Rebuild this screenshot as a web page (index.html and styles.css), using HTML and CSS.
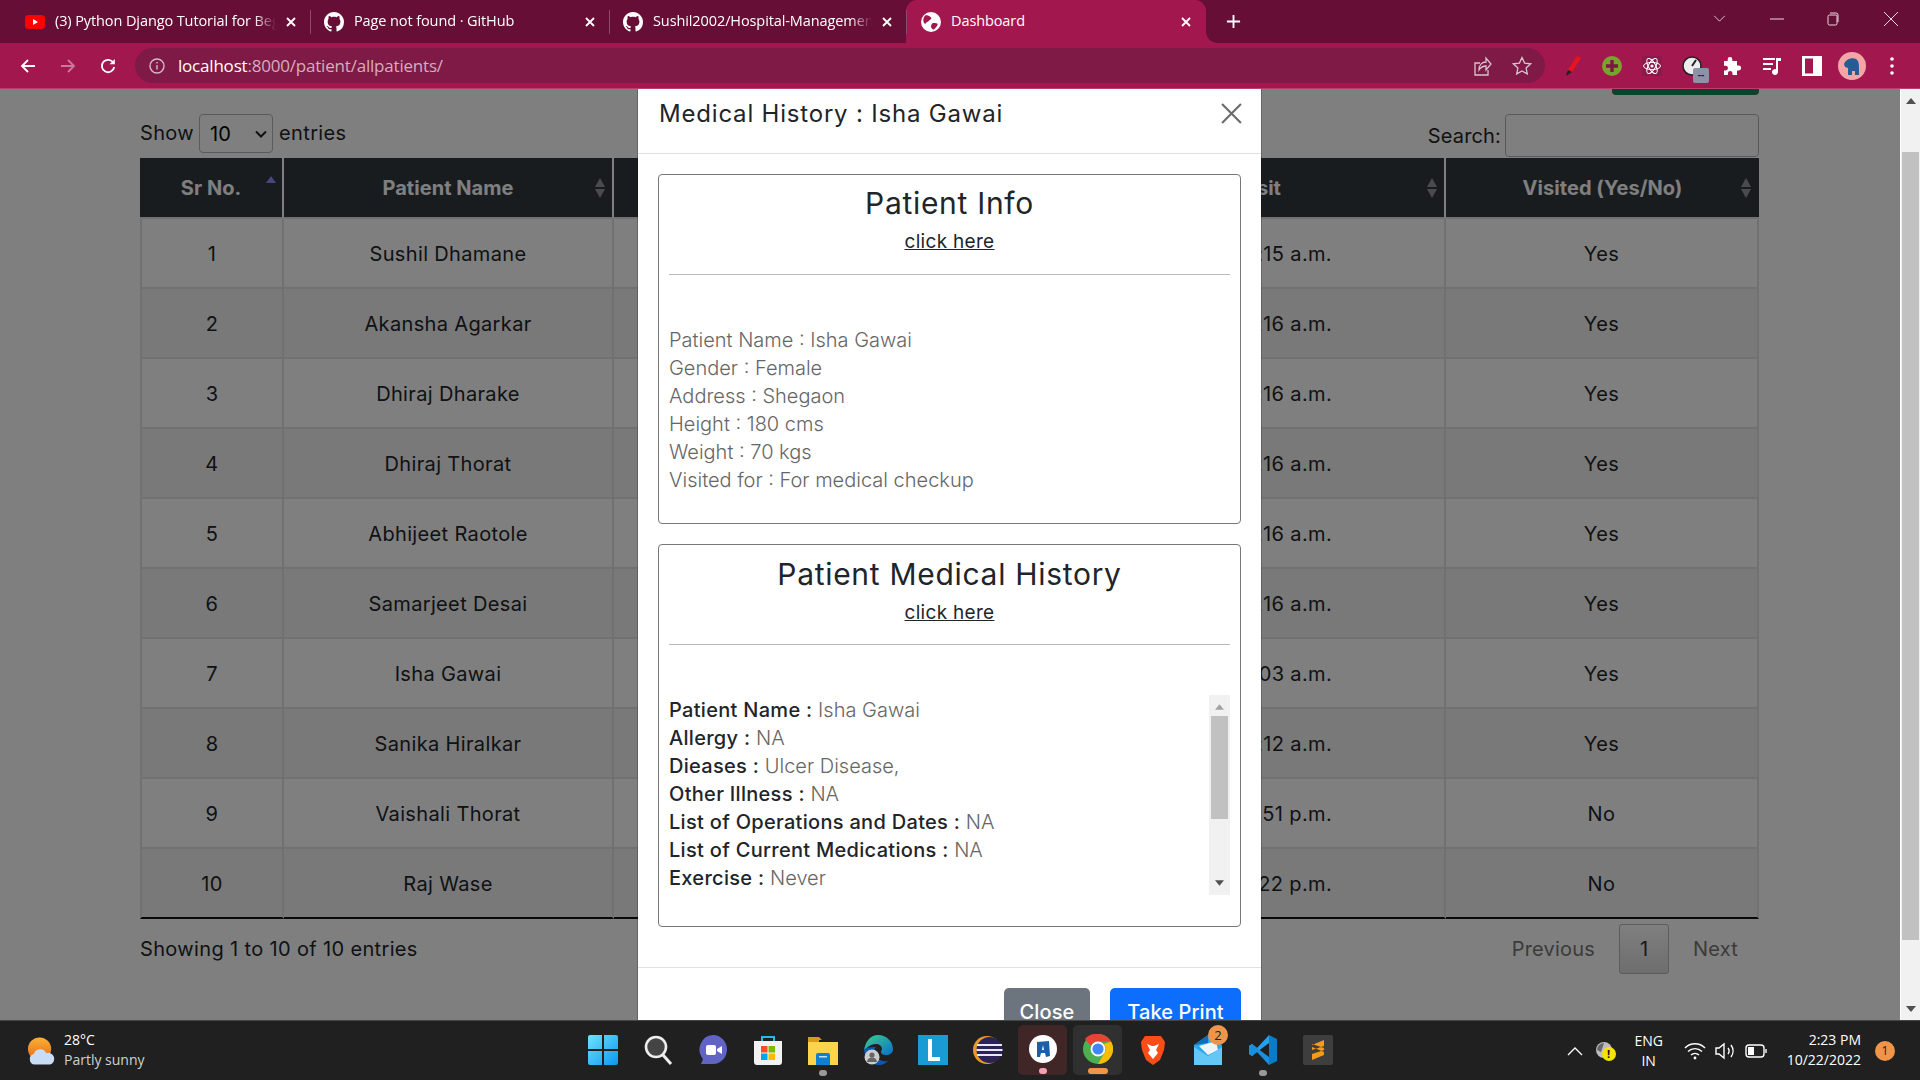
FILE: index.html
```html
<!DOCTYPE html>
<html lang="en">
<head>
<meta charset="utf-8">
<title>Dashboard</title>
<link rel="stylesheet" href="styles.css">
</head>
<body>
<div class="browser">
  <header class="tabstrip">
    <div class="tab">
      <svg class="fav" viewBox="0 0 20 14"><rect width="20" height="14" rx="3.5" fill="#f00"/><path d="M8 4l5 3-5 3z" fill="#fff"/></svg>
      <span class="tab-title">(3) Python Django Tutorial for Beginners</span>
      <svg class="tab-x" viewBox="0 0 10 10"><path d="M1 1l8 8M9 1l-8 8"/></svg>
    </div>
    <div class="tab">
      <svg class="fav" viewBox="0 0 16 16"><path fill="#fff" d="M8 0C3.58 0 0 3.58 0 8c0 3.54 2.29 6.53 5.47 7.59.4.07.55-.17.55-.38 0-.19-.01-.82-.01-1.49-2.01.37-2.53-.49-2.69-.94-.09-.23-.48-.94-.82-1.13-.28-.15-.68-.52-.01-.53.63-.01 1.08.58 1.23.82.72 1.21 1.87.87 2.33.66.07-.52.28-.87.51-1.07-1.78-.2-3.64-.89-3.64-3.95 0-.87.31-1.59.82-2.15-.08-.2-.36-1.02.08-2.12 0 0 .67-.21 2.2.82.64-.18 1.32-.27 2-.27.68 0 1.36.09 2 .27 1.53-1.04 2.2-.82 2.2-.82.44 1.1.16 1.92.08 2.12.51.56.82 1.27.82 2.15 0 3.07-1.87 3.75-3.65 3.95.29.25.54.73.54 1.48 0 1.07-.01 1.93-.01 2.2 0 .21.15.46.55.38A8.013 8.013 0 0016 8c0-4.42-3.58-8-8-8z"/></svg>
      <span class="tab-title">Page not found · GitHub</span>
      <svg class="tab-x" viewBox="0 0 10 10"><path d="M1 1l8 8M9 1l-8 8"/></svg>
    </div>
    <div class="tab tab-last">
      <svg class="fav" viewBox="0 0 16 16"><path fill="#fff" d="M8 0C3.58 0 0 3.58 0 8c0 3.54 2.29 6.53 5.47 7.59.4.07.55-.17.55-.38 0-.19-.01-.82-.01-1.49-2.01.37-2.53-.49-2.69-.94-.09-.23-.48-.94-.82-1.13-.28-.15-.68-.52-.01-.53.63-.01 1.08.58 1.23.82.72 1.21 1.87.87 2.33.66.07-.52.28-.87.51-1.07-1.78-.2-3.64-.89-3.64-3.95 0-.87.31-1.59.82-2.15-.08-.2-.36-1.02.08-2.12 0 0 .67-.21 2.2.82.64-.18 1.32-.27 2-.27.68 0 1.36.09 2 .27 1.53-1.04 2.2-.82 2.2-.82.44 1.1.16 1.92.08 2.12.51.56.82 1.27.82 2.15 0 3.07-1.87 3.75-3.65 3.95.29.25.54.73.54 1.48 0 1.07-.01 1.93-.01 2.2 0 .21.15.46.55.38A8.013 8.013 0 0016 8c0-4.42-3.58-8-8-8z"/></svg>
      <span class="tab-title">Sushil2002/Hospital-Management-System</span>
      <svg class="tab-x" viewBox="0 0 10 10"><path d="M1 1l8 8M9 1l-8 8"/></svg>
    </div>
    <div class="tab tab-active">
      <svg class="fav" viewBox="0 0 18 18"><circle cx="9" cy="9" r="9" fill="#fff"/><path fill="#a3174f" d="M4 3c2 0 4 .5 5 2s-1 2-2 3-3 1-3 3c-2-1-3-5 0-8zm7 7c2 0 4 0 4 1s-2 4-4 5c-1-1-2-2-2-3s1-3 2-3z"/></svg>
      <span class="tab-title">Dashboard</span>
      <svg class="tab-x" viewBox="0 0 10 10"><path d="M1 1l8 8M9 1l-8 8"/></svg>
    </div>
    <svg class="newtab" viewBox="0 0 16 16"><path d="M8 1v14M1 8h14"/></svg>
    <div class="winctl">
      <svg class="wc wc-chev" viewBox="0 0 14 8"><path d="M1 1l6 6 6-6"/></svg>
      <svg class="wc wc-min" viewBox="0 0 14 14"><path d="M0 7h14"/></svg>
      <svg class="wc wc-max" viewBox="0 0 14 14"><rect x="2" y="3" width="9" height="10" rx="1.5"/><path d="M4 1h6a2 2 0 012 2v7"/></svg>
      <svg class="wc wc-close" viewBox="0 0 14 14"><path d="M0 0l14 14M14 0L0 14"/></svg>
    </div>
  </header>

  <nav class="toolbar">
    <svg class="tb tb-back" viewBox="0 0 16 16"><path d="M15 8H2M8 2L2 8l6 6"/></svg>
    <svg class="tb tb-fwd" viewBox="0 0 16 16"><path d="M1 8h13M8 2l6 6-6 6"/></svg>
    <svg class="tb tb-reload" viewBox="0 0 16 16"><path d="M13.5 5A6.2 6.2 0 1014.2 9"/><path class="solid" d="M14.8 1v5.2H9.6z"/></svg>
    <div class="omnibox">
      <svg class="omni-info" viewBox="0 0 16 16"><circle cx="8" cy="8" r="7"/><path d="M8 7v4.5M8 4v1.6"/></svg>
      <span class="url"><span class="url-host">localhost</span>:8000/patient/allpatients/</span>
      <svg class="omni-ic omni-share" viewBox="0 0 18 20"><path d="M14 14v5H1V7h5"/><path d="M5 14c0-5 3-8 7-8V2l5 6-5 6v-4c-3 0-5 1-7 4z"/></svg>
      <svg class="omni-ic omni-star" viewBox="0 0 20 20"><path d="M10 1.5l2.6 5.6 6 .7-4.5 4.1 1.2 6L10 15l-5.3 2.9 1.2-6L1.4 7.8l6-.7z"/></svg>
    </div>
    <div class="exts">
      <svg class="ext" viewBox="0 0 20 20"><path fill="#e8141c" d="M15 0l4 2-9 14-4-2z"/><path fill="#222" d="M6 14l4 2-5 3.500-1-1z"/></svg>
      <svg class="ext" viewBox="0 0 20 20"><circle cx="10" cy="10" r="10" fill="#7aa32b"/><path d="M10 4v12M4 10h12" stroke="#7b1a3f" stroke-width="3.4"/></svg>
      <svg class="ext" viewBox="0 0 20 20"><rect width="20" height="20" fill="#8a1a4b"/><g fill="none" stroke="#fff" stroke-width="1"><ellipse cx="10" cy="10" rx="8.5" ry="3.6"/><ellipse cx="10" cy="10" rx="8.5" ry="3.6" transform="rotate(60 10 10)"/><ellipse cx="10" cy="10" rx="8.5" ry="3.6" transform="rotate(120 10 10)"/></g><circle cx="10" cy="10" r="1.6" fill="#fff"/></svg>
      <div class="ext-gauge">
        <svg class="ext" viewBox="0 0 20 20"><circle cx="10" cy="10" r="9" fill="#eee" stroke="#222" stroke-width="1.5"/><path d="M10 10l4-6" stroke="#222" stroke-width="2"/></svg>
        <span class="gauge-badge">--</span>
      </div>
      <svg class="ext" viewBox="0 0 20 20"><path fill="#fff" d="M8 1a2.2 2.2 0 012.3 2.2V5H15v4.6h1.7a2.4 2.4 0 010 4.8H15V19H10.500v-1.700a2.300 2.300 0 00-4.600 0V19H2v-4.500h1.600a2.400 2.400 0 000-4.800H2V5h3.700V3.200A2.200 2.200 0 018 1z"/></svg>
      <svg class="ext" viewBox="0 0 20 20"><path stroke="#fff" stroke-width="2" d="M1 3h12M1 8h10M1 13h8"/><path fill="#fff" d="M14 2h2v14a3 3 0 11-2-2.800zM14 2h5v3h-5z"/></svg>
      <svg class="ext" viewBox="0 0 20 20"><rect x="1.500" y="1" width="17" height="18" fill="none" stroke="#fff" stroke-width="3"/><rect x="11" y="1" width="8" height="18" fill="#fff"/></svg>
      <svg class="ext-avatar" viewBox="0 0 28 28"><circle cx="14" cy="14" r="14" fill="#f4a6a6"/><path fill="#275b94" d="M6 12c2-5 8-7 12-5 3 2 3 6 3 10v6h-4v-4h-3v4h-4v-7l-3-1z"/></svg>
      <svg class="ext-dots" viewBox="0 0 4 18"><circle cx="2" cy="2" r="1.8"/><circle cx="2" cy="9" r="1.8"/><circle cx="2" cy="16" r="1.8"/></svg>
    </div>
  </nav>

  <div class="viewport">
    <main class="page">
      <div class="top-action"><span class="add-btn"></span></div>
      <div class="dt-controls">
        <label class="dt-length">Show
          <span class="sel-wrap">
            <select class="dt-select"><option>10</option><option>25</option></select>
            <svg class="sel-chev" viewBox="0 0 12 8"><path d="M1 1.500l5 5 5-5"/></svg>
          </span>
          <span class="dt-entries">entries</span></label>
        <label class="dt-search">Search: <input class="dt-input" type="search"></label>
      </div>
      <table class="dt">
        <colgroup><col class="c1"><col class="c2"><col class="c3"><col class="c4"><col class="c5"></colgroup>
        <thead>
          <tr>
            <th>Sr No.<svg class="sort sort-active" viewBox="0 0 12 22"><path class="asc" d="M6 1l5 7H1z"/></svg></th>
            <th>Patient Name<svg class="sort" viewBox="0 0 12 22"><path d="M6 1l5 9H1zM1 12h10l-5 9z"/></svg></th>
            <th></th>
            <th class="cell-visit">Last Visit<svg class="sort" viewBox="0 0 12 22"><path d="M6 1l5 9H1zM1 12h10l-5 9z"/></svg></th>
            <th>Visited (Yes/No)<svg class="sort" viewBox="0 0 12 22"><path d="M6 1l5 9H1zM1 12h10l-5 9z"/></svg></th>
          </tr>
        </thead>
        <tbody>
          <tr><td>1</td><td>Sushil Dhamane</td><td></td><td class="cell-time">10:15 a.m.</td><td>Yes</td></tr>
          <tr><td>2</td><td>Akansha Agarkar</td><td></td><td class="cell-time">10:16 a.m.</td><td>Yes</td></tr>
          <tr><td>3</td><td>Dhiraj Dharake</td><td></td><td class="cell-time">10:16 a.m.</td><td>Yes</td></tr>
          <tr><td>4</td><td>Dhiraj Thorat</td><td></td><td class="cell-time">10:16 a.m.</td><td>Yes</td></tr>
          <tr><td>5</td><td>Abhijeet Raotole</td><td></td><td class="cell-time">10:16 a.m.</td><td>Yes</td></tr>
          <tr><td>6</td><td>Samarjeet Desai</td><td></td><td class="cell-time">10:16 a.m.</td><td>Yes</td></tr>
          <tr><td>7</td><td>Isha Gawai</td><td></td><td class="cell-time">10:03 a.m.</td><td>Yes</td></tr>
          <tr><td>8</td><td>Sanika Hiralkar</td><td></td><td class="cell-time">10:12 a.m.</td><td>Yes</td></tr>
          <tr><td>9</td><td>Vaishali Thorat</td><td></td><td class="cell-time">12:51 p.m.</td><td>No</td></tr>
          <tr><td>10</td><td>Raj Wase</td><td></td><td class="cell-time">12:22 p.m.</td><td>No</td></tr>
        </tbody>
      </table>
      <div class="dt-footer">
        <span>Showing 1 to 10 of 10 entries</span>
        <div class="pager">
          <span class="pg-link pg-prev">Previous</span>
          <span class="pg-current">1</span>
          <span class="pg-link pg-next">Next</span>
        </div>
      </div>

      <div class="backdrop">
        <section class="modal">
          <div class="modal-head">
            <h2 class="modal-title">Medical History : Isha Gawai</h2>
            <svg class="modal-x" viewBox="0 0 20 20"><path d="M1 1l18 18M19 1L1 19"/></svg>
          </div>
          <div class="modal-body">
            <article class="card">
              <h3 class="card-title">Patient Info</h3>
              <a class="card-link" href="#">click here</a>
              <hr class="card-rule">
              <div class="info-lines">
                <p>Patient Name : Isha Gawai</p>
                <p>Gender : Female</p>
                <p>Address : Shegaon</p>
                <p>Height : 180 cms</p>
                <p>Weight : 70 kgs</p>
                <p>Visited for : For medical checkup</p>
              </div>
            </article>
            <article class="card card-history">
              <h3 class="card-title">Patient Medical History</h3>
              <a class="card-link" href="#">click here</a>
              <hr class="card-rule">
              <div class="history-box">
                <div class="history-lines">
                  <p><b>Patient Name :</b> Isha Gawai</p>
                  <p><b>Allergy :</b> NA</p>
                  <p><b>Dieases :</b> Ulcer Disease,</p>
                  <p><b>Other Illness :</b> NA</p>
                  <p><b>List of Operations and Dates :</b> NA</p>
                  <p><b>List of Current Medications :</b> NA</p>
                  <p><b>Exercise :</b> Never</p>
                </div>
                <div class="mini-sb">
                  <svg class="mini-arrow" viewBox="0 0 10 6"><path d="M5 0l5 6H0z"/></svg>
                  <span class="mini-thumb"></span>
                  <svg class="mini-arrow mini-down" viewBox="0 0 10 6"><path d="M0 0h10L5 6z"/></svg>
                </div>
              </div>
            </article>
          </div>
          <div class="modal-foot">
            <button class="btn btn-close" type="button">Close</button>
            <button class="btn btn-print" type="button">Take Print</button>
          </div>
        </section>
      </div>
    </main>
    <aside class="page-sb">
      <svg class="sb-arrow" viewBox="0 0 10 6"><path d="M5 0l5 6H0z"/></svg>
      <span class="sb-thumb"></span>
      <svg class="sb-arrow sb-down" viewBox="0 0 10 6"><path d="M0 0h10L5 6z"/></svg>
    </aside>
  </div>

  <footer class="taskbar">
    <div class="tb-left">
      <svg class="weather" viewBox="0 0 30 30"><defs><linearGradient id="sun" x1="0" y1="0" x2="0" y2="1"><stop offset="0" stop-color="#f9b233"/><stop offset="1" stop-color="#e8661c"/></linearGradient></defs><circle cx="13" cy="13" r="12" fill="url(#sun)"/><path fill="#c8dcf5" d="M8 29a5.500 5.500 0 01-1-10.800 7 7 0 0113-1 5.500 5.500 0 014 11.800z"/></svg>
      <div class="weather-text"><span>28°C</span><span class="dim">Partly sunny</span></div>
    </div>
    <div class="tb-apps">
      <div class="app"><svg class="app-ic" viewBox="0 0 30 30"><defs><linearGradient id="win" x1="0" y1="0" x2="1" y2="1"><stop offset="0" stop-color="#6fe3ff"/><stop offset="1" stop-color="#0a97ee"/></linearGradient></defs><path fill="url(#win)" d="M0 2a2 2 0 012-2h12v14H0zM16 0h12a2 2 0 012 2v12H16zM0 16h14v14H2a2 2 0 01-2-2zM16 16h14v12a2 2 0 01-2 2H16z"/></svg></div>
      <div class="app"><svg class="app-ic" viewBox="0 0 30 30"><circle cx="13" cy="12" r="10" fill="#444" stroke="#eee" stroke-width="2.600"/><path d="M20 20l8 9" stroke="#eee" stroke-width="3"/></svg></div>
      <div class="app"><svg class="app-ic" viewBox="0 0 30 30"><path fill="#6264c4" d="M15 0a14 14.500 0 110 29H3l2-5A14 14.500 0 0115 0z"/><rect x="8" y="10" width="10" height="10" rx="2" fill="#fff"/><path fill="#fff" d="M19 14l5-3v8l-5-3z"/></svg></div>
      <div class="app"><svg class="app-ic" viewBox="0 0 30 30"><path d="M9 6V2h12v4" fill="none" stroke="#2bb5ea" stroke-width="2"/><path fill="#f2f2f2" d="M1 6h28v21a3 3 0 01-3 3H4a3 3 0 01-3-3z"/><rect x="8" y="11" width="6.500" height="6.500" fill="#f25022"/><rect x="15.500" y="11" width="6.500" height="6.500" fill="#7fba00"/><rect x="8" y="18.500" width="6.500" height="6.500" fill="#00a4ef"/><rect x="15.500" y="18.500" width="6.500" height="6.500" fill="#ffb900"/></svg></div>
      <div class="app"><svg class="app-ic" viewBox="0 0 30 30"><path fill="#d9991a" d="M0 2h11l3 3h-3v3H0z"/><path fill="#fbd44b" d="M0 7h30v23H0z"/><path fill="#0f7fd1" d="M8 20a2 2 0 012-2h10a2 2 0 012 2v10H8z"/><path fill="#bfe2f8" d="M11 21h8v1.500h-8z"/></svg><span class="dot"></span></div>
      <div class="app"><svg class="app-ic" viewBox="0 0 30 30"><defs><linearGradient id="edge" x1="0" y1="0" x2="1" y2="1"><stop offset="0" stop-color="#3ccf8e"/><stop offset="1" stop-color="#0b6fc9"/></linearGradient></defs><path fill="url(#edge)" d="M15 0c9 0 15 7 15 14 0 4-3 6-7 6-3 0-5-1-5-3 0-1 1-2 1-3 0-3-3-5-6-5-6 0-11 5-12 7C2 7 7 0 15 0z"/><path fill="#0a58b0" d="M1 15c1 8 7 15 15 15 4 0 7-2 9-4-5 1-11-1-13-6-1-3-1-6 1-8-6 0-11 1-12 3z"/><circle cx="9" cy="22" r="7.500" fill="#ccc"/><circle cx="9" cy="20" r="2.600" fill="#666"/><path fill="#666" d="M4 27a5 4.500 0 0110 0z"/></svg></div>
      <div class="app"><svg class="app-ic" viewBox="0 0 30 30"><rect width="30" height="30" fill="#1b9bd4"/><path fill="#fff" d="M10 4h4v18h8v4H10z"/></svg></div>
      <div class="app"><svg class="app-ic" viewBox="0 0 30 30"><circle cx="14" cy="15" r="14" fill="#e79a2a"/><circle cx="16.500" cy="15" r="13" fill="#2c2255"/><path stroke="#e6e6f5" stroke-width="2.200" d="M4 10h25M3.500 15h26M4 20h25"/></svg></div>
      <div class="app app-running app-red"><svg class="app-ic" viewBox="0 0 30 30"><circle cx="15" cy="15" r="14" fill="#fff"/><path fill="#1c5fa8" d="M9 8l12-1 1 15-4 1-1-4h-4l-1 4H9z"/><path fill="#fff" d="M14 16l1-5 1 5z"/></svg><span class="dot dot-pink"></span></div>
      <div class="app app-running app-grey"><svg class="app-ic" viewBox="0 0 30 30"><circle cx="15" cy="15" r="15" fill="#4caf50"/><path fill="#ea4335" d="M15 0a15 15 0 0113 7.500H15a7.500 7.500 0 00-7 4.500L2 5a15 15 0 0113-5z"/><path fill="#fbbc05" d="M28 7.500A15 15 0 0115 30l6.500-11.200A7.500 7.500 0 0021 10z"/><circle cx="15" cy="15" r="6.500" fill="#4285f4" stroke="#fff" stroke-width="1.800"/></svg><span class="dot dot-wide"></span></div>
      <div class="app"><svg class="app-ic" viewBox="0 0 30 30"><path fill="#fb4d18" d="M7 1h16l4 6-1 8-4 10-7 5-7-5-4-10-1-8z"/><path fill="#fff" d="M9 9l5 2h2l5-2-3 6 2 3-5 6-5-6 2-3z"/></svg></div>
      <div class="app"><svg class="app-ic" viewBox="0 0 30 30"><path fill="#2ba6e8" d="M1 10L15 0l14 10v20H1z"/><path fill="#0f6db9" d="M1 10L15 0v8z"/><path fill="#eef4f8" d="M6 11l17-5 2 9-10 5z"/><path fill="#65c7f5" d="M1 12l14 9 14-9v18H1z"/></svg><span class="mail-badge">2</span></div>
      <div class="app"><svg class="app-ic" viewBox="0 0 30 30"><path fill="#0a7cc7" d="M21 0l8 4v22l-8 4z"/><path fill="#24a0ee" d="M21 0v8L9 17l-5 4-3-2v-8l3-2 5 4z"/><path fill="#1a8fdc" d="M21 30V22L9 13l-5-4-3 2v8l3 2 5-4z"/></svg><span class="dot"></span></div>
      <div class="app"><svg class="app-ic" viewBox="0 0 30 30"><rect width="30" height="30" rx="2" fill="#3e3e3e"/><path fill="#f79a15" d="M21 5v6L9 15v-5zM9 25v-6l12-4v5zM9 12l12 5v-4L9 9z"/></svg></div>
    </div>
    <div class="tb-tray">
      <svg class="tray-caret" viewBox="0 0 16 9"><path d="M1 8l7-7 7 7"/></svg>
      <div class="tray-drive">
        <svg class="tray-cloud" viewBox="0 0 20 20"><circle cx="10" cy="9" r="8" fill="#bdbdbd"/><path fill="#666" d="M3 9a7 7 0 017-7l-3 9z"/></svg>
        <span class="tray-warn">!</span>
      </div>
      <div class="tray-lang"><span>ENG</span><span>IN</span></div>
      <svg class="tray-ic tray-wifi" viewBox="0 0 22 18"><path d="M1 6a14 14 0 0120 0M4 9.500a10 10 0 0114 0M7 13a6 6 0 018 0"/><circle class="solid" cx="11" cy="16" r="1.400"/></svg>
      <svg class="tray-ic tray-vol" viewBox="0 0 22 18"><path d="M2 6v6h3l5 4V2L5 6z"/><path d="M14 6a5 5 0 010 6M17 3a10 10 0 010 12"/></svg>
      <svg class="tray-ic tray-batt" viewBox="0 0 22 18"><rect x="1" y="3" width="18" height="12" rx="3"/><rect class="solid" x="3" y="5" width="6" height="8"/><path d="M21 7v4"/></svg>
      <div class="tray-clock"><span>2:23 PM</span><span>10/22/2022</span></div>
      <span class="tray-badge">1</span>
    </div>
  </footer>
</div>
</body>
</html>
```
FILE: styles.css
```css
* { box-sizing: border-box; }
html, body { margin: 0; height: 100%; overflow: hidden; }
body { font-family: Inter, "Noto Sans", sans-serif; color: #212529; }
p, h2, h3 { margin: 0; }
.browser { display: flex; flex-direction: column; height: 100vh; }

/* tab strip */
.tabstrip { height: 43px; flex: none; display: flex; align-items: center; background: #660e35; font-family: "Open Sans", sans-serif; color: #fff; }
.tab { width: 299px; height: 43px; padding: 0 14px 0 25px; display: flex; align-items: center; position: relative; flex: none; }
.tab:first-child { width: 310px; }
.tab + .tab::before { content: ""; position: absolute; left: 0; top: 10px; height: 24px; width: 1px; background: #8f4a68; }
.tab-last { width: 297px; }
.tab:nth-child(2) { padding-left: 14px; }
.tab:nth-child(3) { padding-left: 14px; }
.fav { width: 20px; height: 20px; flex: none; }
.tab-title { flex: 1; margin-left: 10px; margin-bottom: 2px; font-size: 14.500px; white-space: nowrap; overflow: hidden; letter-spacing: -.1px; -webkit-mask-image: linear-gradient(90deg, #000 90%, transparent); mask-image: linear-gradient(90deg, #000 90%, transparent); }
.tab-x { width: 10px; height: 10px; flex: none; margin-left: 10px; fill: none; stroke: #fff; stroke-width: 1.800; }
.tab-active { width: 300px; height: 43px; background: #a3174f; border-radius: 11px 11px 0 0; padding-left: 15px; padding-right: 15px; }
.tab-active::before, .tab-active::after { content: ""; position: absolute; bottom: 0; width: 11px; height: 11px; }
.tab-active::before { left: -11px; top: auto; background: radial-gradient(circle at 0 0, #660e35 10.500px, #a3174f 11px); }
.tab-active::after { right: -11px; background: radial-gradient(circle at 100% 0, #660e35 10.500px, #a3174f 11px); }
.tab-active .tab-title { mask-image: none; -webkit-mask-image: none; }
.newtab { width: 15px; height: 15px; margin-left: 20px; fill: none; stroke: #fff; stroke-width: 2; flex: none; }
.winctl { margin-left: auto; display: flex; align-items: center; height: 43px; padding-right: 22px; }
.wc { fill: none; stroke: #e9dbe1; stroke-width: 1; flex: none; margin-bottom: 6px; }
.wc-chev { width: 13px; height: 7px; }
.wc-min { width: 14px; height: 14px; margin-left: 44px; }
.wc-max { width: 14px; height: 14px; margin-left: 42px; }
.wc-close { width: 14px; height: 14px; margin-left: 44px; }

/* toolbar */
.toolbar { height: 46px; flex: none; display: flex; align-items: center; background: #a3174f; border-bottom: 1px solid #c03b70; padding-left: 20px; }
.tb { width: 16px; height: 16px; flex: none; fill: none; stroke: #fff; stroke-width: 1.800; }
.tb-fwd { margin-left: 24px; stroke: #c87a9b; }
.tb-reload { margin-left: 24px; }
.tb .solid { fill: #fff; stroke: none; }
.omnibox { width: 1410px; height: 35px; margin-left: 19px; border-radius: 18px; background: #7e1a45; display: flex; align-items: center; padding-left: 14px; flex: none; }
.omni-info { width: 16px; height: 16px; flex: none; fill: none; stroke: #d7b8c6; stroke-width: 1.400; }
.url { margin-left: 13px; font: 17px "Open Sans", sans-serif; color: #d5aebf; letter-spacing: -.2px; }
.url-host { color: #fff; }
.omni-ic { fill: none; stroke: #d7c3cd; stroke-width: 1.300; flex: none; }
.omni-share { width: 18px; height: 20px; margin-left: auto; }
.omni-star { width: 20px; height: 20px; margin-left: 20px; margin-right: 13px; }
.exts { display: flex; align-items: center; margin-left: 17px; }
.ext { width: 20px; height: 20px; flex: none; margin-right: 20px; }
.ext-gauge { position: relative; width: 20px; height: 20px; margin-right: 20px; }
.ext-gauge .ext { margin: 0; }
.gauge-badge { position: absolute; left: 11px; top: 12px; width: 16px; height: 15px; border-radius: 2px; background: #8e92a8; color: #222; font: 700 10px/13px "Open Sans", sans-serif; text-align: center; }
.ext-avatar { width: 28px; height: 28px; flex: none; margin: 0 24px 0 -4px; }
.ext-dots { width: 4px; height: 18px; fill: #fff; flex: none; }

/* page */
.viewport { flex: 1; min-height: 0; display: flex; overflow: hidden; }
.page { flex: 1; position: relative; background: #fff; padding: 0 141px 0 140px; font-size: 20px; overflow: hidden; min-width: 0; letter-spacing: .35px; }
.top-action { display: flex; justify-content: flex-end; }
.add-btn { width: 147px; height: 6px; background: #198754; border-radius: 0 0 4px 4px; }
.dt-controls { margin-top: 19px; display: flex; justify-content: space-between; height: 44px; }
.dt-length { display: flex; align-items: flex-start; gap: 5px; line-height: 38px; }
.dt-entries { margin-left: 1px; }
.sel-wrap { position: relative; display: block; width: 74px; height: 39px; }
.dt-select { appearance: none; -webkit-appearance: none; display: block; width: 74px; height: 39px; border: 1px solid #b4b4b4; border-radius: 4px; background: #fff; font: 20px Inter, sans-serif; color: #000; padding-left: 10px; }
.sel-chev { position: absolute; right: 6px; top: 16px; width: 12px; height: 8px; fill: none; stroke: #222; stroke-width: 2; }
.dt-search { display: flex; align-items: center; gap: 4px; height: 43px; letter-spacing: .15px; }
.dt-input { width: 254px; height: 43px; border: 1px solid #b4b4b4; border-radius: 4px; background: #fff; }
.dt { width: 1619px; table-layout: fixed; border-collapse: separate; border-spacing: 0; text-align: center; }
.c1 { width: 144px; } .c2 { width: 330px; } .c3 { width: 342px; } .c4 { width: 490px; } .c5 { width: 313px; }
.dt th { height: 61px; padding-top: 1px; background: #33383e; color: #fff; font-weight: 700; border-right: 2px solid #fff; border-bottom: 2px solid #dee2e6; position: relative; letter-spacing: .05px; }
.dt th:last-child { border-right: 0; }
.dt td { height: 70px; padding-top: 2px; border-right: 2px solid #dee2e6; border-bottom: 2px solid #dee2e6; }
.dt td:first-child { border-left: 2px solid #dee2e6; }
.dt td.cell-time { text-align: right; padding-right: 112px; }
.dt th.cell-visit { text-align: right; padding-right: 163px; }
.dt tbody tr:nth-child(even) td { background: #f2f2f2; }
.dt tbody tr:last-child td { border-bottom-color: #111; }
.sort { position: absolute; right: 6px; top: 19px; width: 12px; height: 22px; fill: #f4f4f4; opacity: .5; }
.dt th:last-child .sort { right: 7px; }
.sort .asc { fill: #8f8fff; }
.sort-active { opacity: 1; top: 17px; right: 5px; }
.dt-footer { margin-top: 5px; display: flex; justify-content: space-between; align-items: center; height: 50px; }
.pager { display: flex; align-items: center; padding-right: 21px; color: #777; letter-spacing: .2px; }
.pg-prev { margin-right: 24px; }
.pg-next { margin-left: 24px; }
.pg-current { width: 50px; height: 50px; border: 1px solid #b8b8b8; border-radius: 3px; background: linear-gradient(#fff, #dcdcdc); color: #333; display: flex; align-items: center; justify-content: center; }

/* modal */
.backdrop { position: absolute; inset: 0; background: rgba(0, 0, 0, .5); padding-left: 638px; }
.modal { width: 623px; background: #fff; font-size: 20px; letter-spacing: 0; box-shadow: 0 0 0 1px rgba(0, 0, 0, .2); }
.modal-head { height: 65px; padding: 7px 19px 0 21px; border-bottom: 1px solid #dee2e6; display: flex; justify-content: space-between; align-items: flex-start; }
.modal-title { font-size: 24px; line-height: 36px; font-weight: 400; color: #212529; letter-spacing: .8px; }
.modal-x { width: 21px; height: 21px; margin-top: 7px; fill: none; stroke: #6b6b6b; stroke-width: 2; flex: none; }
.modal-body { padding: 20px 20px 0; display: flex; flex-direction: column; gap: 20px; }
.card { border: 1px solid #777; border-radius: 4px; padding: 8px 10px 29px; display: flex; flex-direction: column; align-items: stretch; }
.card-title { font-size: 30px; line-height: 40px; font-weight: 400; text-align: center; letter-spacing: .7px; }
.card-link { margin-top: 7px; font-size: 19px; line-height: 24px; color: #212529; text-align: center; letter-spacing: .3px; }
.card-rule { margin: 20px 0 0; width: 100%; height: 1px; border: 0; background: #bbb; }
.info-lines { margin-top: 51px; font-weight: 300; line-height: 28px; color: #666; }
.card-history { padding-top: 9px; padding-bottom: 31px; }
.card-history .card-rule { margin-top: 19px; }
.history-box { margin-top: 50px; height: 200px; display: flex; overflow: hidden; }
.history-lines { flex: 1; padding-top: 1px; line-height: 28px; font-weight: 300; color: #666; overflow: hidden; }
.history-lines b { font-weight: 500; color: #212529; letter-spacing: .3px; }
.mini-sb { width: 21px; background: #f1f1f1; display: flex; flex-direction: column; align-items: center; padding-top: 9px; }
.mini-arrow { width: 9px; height: 6px; fill: #a3a3a3; flex: none; }
.mini-thumb { width: 17px; height: 103px; background: #c1c1c1; margin-top: 6px; flex: none; }
.mini-down { margin-top: auto; margin-bottom: 9px; fill: #505050; }
.modal-foot { margin-top: 40px; border-top: 1px solid #dee2e6; padding: 20px 20px 0 0; display: flex; justify-content: flex-end; gap: 20px; }
.btn { height: 48px; border: 0; border-radius: 5px; color: #fff; font: 500 20px Inter, sans-serif; letter-spacing: .1px; padding: 0; }
.btn-close { width: 86px; background: #6c757d; }
.btn-print { width: 131px; background: #0d6efd; }

/* page scrollbar */
.page-sb { width: 20px; flex: none; background: #f1f1f1; display: flex; flex-direction: column; align-items: center; padding-top: 9px; border-left: 1px solid #fff; }
.sb-arrow { width: 10px; height: 6px; fill: #505050; flex: none; }
.sb-thumb { width: 17px; height: 788px; margin-top: 48px; background: #c1c1c1; flex: none; }
.sb-down { margin-top: auto; margin-bottom: 8px; }

/* taskbar */
.taskbar { height: 60px; flex: none; background: #202020; border-top: 1px solid #454545; display: grid; grid-template-columns: 1fr auto 1fr; align-items: center; color: #fff; font: 14px "Open Sans", sans-serif; }
.tb-left { display: flex; align-items: center; padding-left: 27px; gap: 8px; }
.weather { width: 29px; height: 30px; flex: none; }
.weather-text { display: flex; flex-direction: column; line-height: 20px; margin-bottom: 2px; }
.dim { color: #d0d0d0; }
.tb-apps { display: flex; }
.app { width: 55px; height: 60px; display: flex; align-items: center; justify-content: center; position: relative; }
.app-ic { width: 30px; height: 30px; flex: none; margin-bottom: 2px; }
.app-running { margin: 4px 3px 0; width: 49px; height: 50px; border-radius: 5px; align-self: flex-start; }
.app-red { background: #402626; }
.app-grey { background: #303030; }
.dot { position: absolute; left: 50%; bottom: 5px; width: 8px; height: 6px; margin-left: -4px; border-radius: 3px; background: #999; }
.app-running .dot { bottom: 1px; }
.dot-pink { background: #f5a0b0; }
.dot-wide { width: 20px; margin-left: -10px; background: #f0944a; }
.mail-badge { position: absolute; left: 28px; top: 4px; width: 20px; height: 20px; border-radius: 50%; background: #f0944a; color: #222; font-size: 13px; line-height: 20px; text-align: center; }
.tb-tray { display: flex; align-items: center; justify-content: flex-end; padding-right: 25px; }
.tray-caret { width: 16px; height: 9px; fill: none; stroke: #fff; stroke-width: 1.300; flex: none; }
.tray-drive { position: relative; width: 20px; height: 20px; margin-left: 11px; }
.tray-cloud { width: 20px; height: 20px; }
.tray-warn { position: absolute; left: 8px; top: 6px; width: 14px; height: 14px; border-radius: 50%; background: #f5e400; color: #111; font: 700 11px/14px "Open Sans", sans-serif; text-align: center; }
.tray-lang { width: 44px; margin-left: 13px; display: flex; flex-direction: column; align-items: center; line-height: 20px; margin-bottom: 1px; }
.tray-ic { width: 22px; height: 18px; fill: none; stroke: #fff; stroke-width: 1.400; flex: none; margin-left: 8px; }
.tray-wifi { margin-left: 13px; }
.tray-batt { margin-left: 9px; }
.tray-ic .solid { fill: #fff; stroke: none; }
.tray-clock { margin-left: 20px; display: flex; flex-direction: column; align-items: flex-end; line-height: 20px; margin-bottom: 2px; }
.tray-badge { width: 20px; height: 20px; margin-left: 14px; border-radius: 50%; background: #f0944a; color: #222; font-size: 12px; line-height: 20px; text-align: center; flex: none; }
```
